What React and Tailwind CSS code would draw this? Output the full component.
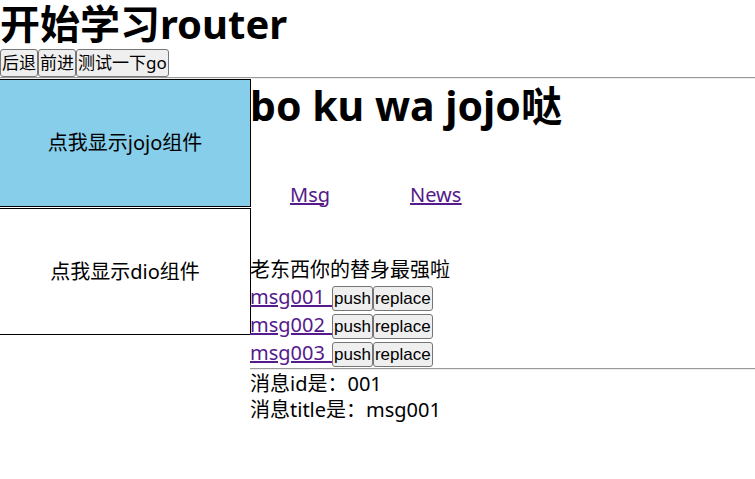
const messages = ['msg001', 'msg002', 'msg003'];

const buttonStyle =
  'shrink-0 rounded-[3px] border border-[#767676] bg-[#efefef] px-px text-[17px] text-black';

function Rule() {
  return <hr className="h-0.5 border-t border-b border-t-[#9a9a9a] border-b-[#eeeeee]" />;
}

function Sidebar() {
  return (
    <nav className="flex w-[251px] shrink-0 flex-col gap-px">
      <a
        href="#jojo"
        className="flex h-32 items-center justify-center border-y border-r border-black bg-[#87ceeb]"
      >
        点我显示jojo组件
      </a>
      <a
        href="#dio"
        className="flex h-[127px] items-center justify-center border-y border-r border-black"
      >
        点我显示dio组件
      </a>
    </nav>
  );
}

function MessageRow({ name }) {
  return (
    <li className="flex h-7 items-center">
      <a href={`#${name}`} className="w-[82px] pb-0.5 whitespace-pre text-[#551a8b] underline">
        {name + '  '}
      </a>
      <button type="button" className={`${buttonStyle} h-[25px] font-['Liberation_Sans',sans-serif] leading-[23px]`}>
        push
      </button>
      <button type="button" className={`${buttonStyle} h-[25px] font-['Liberation_Sans',sans-serif] leading-[23px]`}>
        replace
      </button>
    </li>
  );
}

export default function App() {
  return (
    <div className="min-h-screen bg-white font-['Noto_Sans','Noto_Sans_CJK_SC',sans-serif] text-xl leading-[26px] text-black">
      <h1 className="pb-0.5 text-[40px] leading-[47px] font-bold">开始学习router</h1>
      <div className="flex">
        <button type="button" className={`${buttonStyle} h-7 leading-[26px]`}>后退</button>
        <button type="button" className={`${buttonStyle} h-7 leading-[26px]`}>前进</button>
        <button type="button" className={`${buttonStyle} h-7 leading-[26px]`}>测试一下go</button>
      </div>
      <Rule />
      <div className="flex items-start">
        <Sidebar />
        <main className="-ml-px min-w-0 flex-1">
          <h1 className="text-[41px] leading-[53px] font-bold">bo ku wa jojo哒</h1>
          <nav className="flex h-[125px] items-center text-[#551a8b] underline">
            <a href="#msg" className="px-10">Msg</a>
            <a href="#news" className="px-10">News</a>
          </nav>
          <p>老东西你的替身最强啦</p>
          <ul className="pt-px">
            {messages.map((name) => (
              <MessageRow key={name} name={name} />
            ))}
          </ul>
          <Rule />
          <div className="pt-px">
            <p>消息id是：001</p>
            <p>消息title是：msg001</p>
          </div>
        </main>
      </div>
    </div>
  );
}
